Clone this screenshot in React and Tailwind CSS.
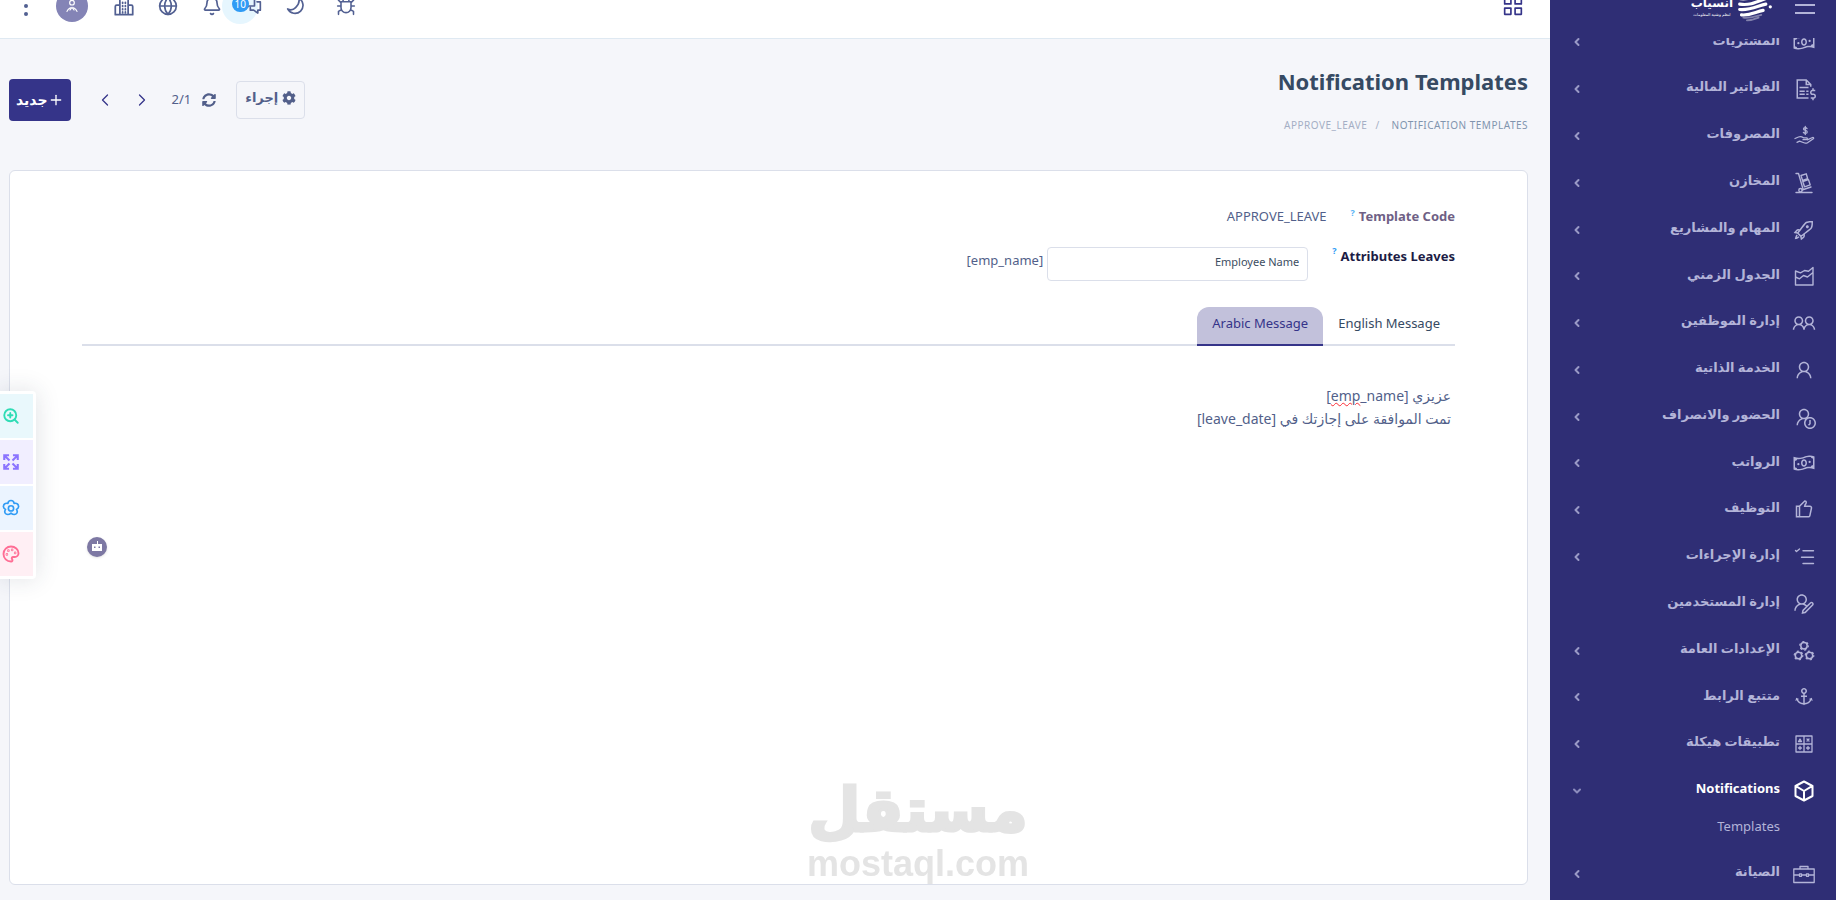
import React, { useState } from "react";
import {
  LiaAnchorSolid,
  LiaFileInvoiceDollarSolid,
  LiaMoneyBillWaveSolid,
  LiaRocketSolid,
  LiaThumbsUp,
  LiaUserClockSolid,
  LiaUserEditSolid,
  LiaUserFriendsSolid,
  LiaUserSolid,
} from "react-icons/lia";
import { FaCog, FaSyncAlt } from "react-icons/fa";
import { ChevronDown, ChevronLeft, ChevronRight, Globe, Palette, Plus, ZoomIn, Bell } from "lucide-react";

function Svg({ children, className = "size-6", width = 1.5, ...rest }) {
  return (
    <svg
      viewBox="0 0 24 24"
      className={className}
      fill="none"
      stroke="currentColor"
      strokeWidth={width}
      strokeLinecap="round"
      strokeLinejoin="round"
      aria-hidden="true"
      {...rest}
    >
      {children}
    </svg>
  );
}

const HandDollarIcon = () => (
  <Svg width={1.3}>
    <path d="M15 4.6c-.4-.7-1-1-1.7-1-1 0-1.8.6-1.8 1.4s.7 1.2 1.8 1.4 1.9.7 1.9 1.5-.8 1.5-1.9 1.5c-.8 0-1.5-.4-1.9-1M13.3 2.4v8.2" />
    <path d="M3 14.5 6.5 13c2-.8 3.5-.3 5 .8h3c1 0 1.200 1.700 0 1.900h-3.500M15.300 15.800l5.200-2.300c1-.3 1.600.7.800 1.300l-5.800 4c-1 .6-1.800.5-2.800.2L7.500 17.200 5 18.300" />
  </Svg>
);

const DollyIcon = () => (
  <Svg width={1.4}>
    <path d="M4 2.5h2.5L11 18M4 21.5h16M10 19l9-3" />
    <circle cx="8.5" cy="19.2" r="1.7" />
    <path d="m9 4.5 5.2-1.7 1.5 4.9-5.2 1.700zM10.800 10.500l5.700-1.800 1.700 5.200-5.700 1.900z" />
  </Svg>
);

const AreaIcon = () => (
  <Svg width={1.4}>
    <path d="M3.5 7v14h17.5V3.5l-4.5 3.8-4-.8-4 2.3zM3.5 13l4 1.8 4-3.3 4 1.5 5.5-4.5" />
  </Svg>
);

const TasksIcon = () => (
  <Svg width={1.4}>
    <path d="m3.5 5.500 1 1 3-2.500M11 5.800h10.500M9.500 12.200h12M11 18.500h10.500" />
  </Svg>
);

const GearsIcon = () => (
  <Svg width={1.5}>
    <circle cx="12" cy="6.8" r="3.2" />
    <circle cx="6.5" cy="16.5" r="3.2" />
    <circle cx="17.5" cy="16.5" r="3.2" />
    <g strokeWidth="1.2" strokeDasharray="1.2 3.4">
      <circle cx="12" cy="6.8" r="4.3" />
      <circle cx="6.5" cy="16.5" r="4.3" />
      <circle cx="17.5" cy="16.5" r="4.3" />
    </g>
  </Svg>
);

const AppsIcon = () => (
  <Svg width={1.3}>
    <path d="M4 4h16v16H4zM12 4v16M4 12h16M6.500 9.500 8 7l1.500 2.500zM15 7l2 2M17 7l-2 2M6.500 16h3M8 14.500v3M16 14.500v3M14.500 16h3" />
  </Svg>
);

const CubeIcon = () => (
  <Svg width={2}>
    <path d="M12 2.5 20.5 7v10L12 21.5 3.5 17V7zM4 7.2 12 12l8-4.8M12 12v9" />
  </Svg>
);

const ToolboxIcon = () => (
  <Svg width={1.3}>
    <path d="M1.800 7h20.400v13.500H1.800zM8 7V4.500h8V7M1.800 13h5.700M9.500 13h5M16.500 13h5.700M7.500 11.800h2v2.500h-2zM14.500 11.800h2v2.500h-2z" />
  </Svg>
);

const BuildingIcon = () => (
  <Svg className="size-[22px]" width={1.9}>
    <path d="M7.5 21.5V5l4.5-3 4.5 3v16.5M7.5 11H4a1.5 1.5 0 0 0-1.5 1.5v9h19v-9A1.5 1.5 0 0 0 20 11h-3.5" />
    <path strokeDasharray="1 2.5" d="M10.5 8v12M13.5 8v12" />
  </Svg>
);

const ChatsIcon = () => (
  <Svg className="size-5" width={2}>
    <path d="M2 3h13v9H8l-3 3v-3H2zM18 7h4v10h-3v3.500L14 17h-4v-3" />
  </Svg>
);

const BugIcon = () => (
  <Svg className="size-5" width={1.9}>
    <path d="M6 7h12v7a6 6 0 0 1-12 0zM8.500 7V5.500a3.500 3.500 0 0 1 7 0V7M6 12H2M22 12h-4M6 8 3 5M18 8l3-3M6.500 16.500 3 18.500V22M17.500 16.500l3.500 2V22" />
  </Svg>
);

const MoonIcon = () => (
  <Svg className="size-5" width={2}>
    <path d="M15 2.500a9.700 9.700 0 1 1-13 13c3 1.500 7 1 9.500-1.500S17 7 15 2.500z" />
  </Svg>
);

const ExpandIcon = ({ className }) => (
  <Svg className={className} width={2.8} strokeLinecap="square" strokeLinejoin="miter">
    <path d="M3 8V3h5M3.500 3.500 9 9M16 3h5v5M20.500 3.500 15 9M3 16v5h5M3.500 20.500 9 15M21 16v5h-5M20.500 20.500 15 15" />
  </Svg>
);

const FlowerIcon = ({ className }) => (
  <Svg className={className} width={2.2}>
    <circle cx="12" cy="12.5" r="3.5" />
    <path d="M12 2c2.400 0 3.900 1.700 4.100 3.900 2.500-.5 5.100.3 5.800 2.700.8 2.300-.7 4.100-2.600 5.200 1.200 2 1.300 4.700-.6 6.100-2 1.400-4.700.5-6.700-1.200-2 1.700-4.700 2.600-6.700 1.200-1.900-1.400-1.800-4.100-.6-6.100-1.900-1.100-3.400-2.900-2.600-5.200.7-2.400 3.300-3.200 5.800-2.700C8.100 3.700 9.600 2 12 2z" />
  </Svg>
);

const BotIcon = () => (
  <svg viewBox="0 0 12 12" className="size-3" aria-hidden="true">
    <path fill="currentColor" fillRule="evenodd" d="M6 0h1v3h4v7H1V3h5zM3 5.500v1.500h1.500V5.500zM7.500 5.500v1.500H9V5.500z" />
  </svg>
);

const menu = [
  { label: "المشتريات", Icon: LiaMoneyBillWaveSolid },
  { label: "الفواتير المالية", Icon: LiaFileInvoiceDollarSolid },
  { label: "المصروفات", Icon: HandDollarIcon },
  { label: "المخازن", Icon: DollyIcon },
  { label: "المهام والمشاريع", Icon: LiaRocketSolid },
  { label: "الجدول الزمني", Icon: AreaIcon },
  { label: "إدارة الموظفين", Icon: LiaUserFriendsSolid },
  { label: "الخدمة الذاتية", Icon: LiaUserSolid },
  { label: "الحضور والانصراف", Icon: LiaUserClockSolid },
  { label: "الرواتب", Icon: LiaMoneyBillWaveSolid },
  { label: "التوظيف", Icon: LiaThumbsUp },
  { label: "إدارة الإجراءات", Icon: TasksIcon },
  { label: "إدارة المستخدمين", Icon: LiaUserEditSolid, leaf: true },
  { label: "الإعدادات العامة", Icon: GearsIcon },
  { label: "متتبع الرابط", Icon: LiaAnchorSolid },
  { label: "تطبيقات هيكلة", Icon: AppsIcon },
  { label: "Notifications", Icon: CubeIcon, open: true, children: ["Templates"] },
  { label: "الصيانة", Icon: ToolboxIcon },
];

const dock = [
  { label: "Zoom", Icon: ZoomIn, tone: "bg-[#e9f8fc] text-[#2fdcb5]" },
  { label: "Fullscreen", Icon: ExpandIcon, tone: "bg-[#f1eeff] text-[#8b74ff]" },
  { label: "Settings", Icon: FlowerIcon, tone: "bg-[#ebf4ff] text-[#2f9bf5]" },
  { label: "Theme", Icon: Palette, tone: "bg-[#ffeff4] text-[#ff6d94]" },
];

function Sidebar() {
  return (
    <aside className="flex h-screen w-[286px] shrink-0 flex-col overflow-hidden bg-[#2f2e75] text-[#b3b4d8]">
      <div className="z-10 h-[38px] shrink-0 overflow-hidden bg-[#2f2e75]">
        <div className="-mt-7 flex h-[66px] items-center gap-5 pr-[21px]">
          <button aria-label="Menu" className="flex w-5 flex-col gap-[6px]">
            <span className="h-[2px] bg-current" />
            <span className="h-[2px] bg-current" />
            <span className="h-[2px] bg-current" />
          </button>
          <a href="#home" className="flex items-center gap-[2px] text-white">
            <svg viewBox="0 0 38 40" className="h-9 w-10" fill="none" stroke="currentColor" strokeLinecap="round" aria-hidden="true">
              <path strokeWidth="3.5" d="M3 13c10 1 18-3 30-8M2 19c12 2 20-3 31-7M2 25c12 1 20-4 29-6M4 31c9 1 15-3 24-5" />
              <path strokeWidth="2" opacity=".4" d="M6 34c7 1 12-1 20-3M10 37c5 0 8-1 13-3" />
              <circle cx="36" cy="22" r="1.8" fill="currentColor" stroke="none" />
            </svg>
            <span className="flex flex-col items-center pt-1">
              <span className="text-xs leading-4 font-bold">انسياب</span>
              <span className="text-[4px] leading-2">لنظم وتقنية المعلومات</span>
            </span>
          </a>
        </div>
      </div>

      <nav>
        <ul className="-mt-[19px] flex h-[878px] flex-col">
          {menu.map(({ label, Icon, leaf, open, children }) => (
            <React.Fragment key={label}>
              <li className="flex-1">
                <a
                  href="#menu"
                  className={[
                    "flex h-full items-center gap-3 pr-5 pl-[21px] text-[13px] font-bold",
                    open ? "text-white" : "",
                  ].join(" ")}
                >
                  <span className="grid size-6 place-items-center text-2xl">
                    <Icon />
                  </span>
                  <span className="flex-1 pb-1">{label}</span>
                  {open ? (
                    <ChevronDown className="size-3 text-[#8c8cbd]" strokeWidth={4} />
                  ) : leaf ? null : (
                    <ChevronLeft className="size-3 text-[#9a9ac6]" strokeWidth={4} />
                  )}
                </a>
              </li>
              {children?.map((c) => (
                <li key={c} className="h-9 pr-14 text-[13px] leading-6">
                  <a href="#templates">{c}</a>
                </li>
              ))}
            </React.Fragment>
          ))}
        </ul>
      </nav>
    </aside>
  );
}

function Topbar() {
  return (
    <header className="h-[39px] shrink-0 overflow-hidden border-b border-[#dfe9f2] bg-white text-[#526092]">
      <div className="-mt-7 flex h-[67px] items-center pr-[27px] pl-[15px]">
        <button aria-label="Apps" className="ml-auto text-[#353489]">
          <Svg className="size-5" width={2}>
            <path d="M2 2h7.500v7.500H2zM14.500 2H22v7.500h-7.500zM2 14.500h7.500V22H2zM14.500 14.500H22V22h-7.500z" />
          </Svg>
        </button>
        <div className="flex items-center">
          <button aria-label="Debug" className="ml-[30px]"><BugIcon /></button>
          <button aria-label="Dark mode" className="ml-6"><MoonIcon /></button>
          <button aria-label="Messages" className="relative ml-5">
            <span className="absolute -top-2 right-1 size-9 rounded-full bg-[#e6f6fe]" />
            <span className="relative block"><ChatsIcon /></span>
            <span className="absolute top-0 right-[13px] rounded-full bg-[#2f9bf5] px-[3px] text-[10px] leading-4 text-white">10</span>
          </button>
          <button aria-label="Notifications" className="ml-6"><Bell className="size-5" /></button>
          <button aria-label="Language" className="ml-[23px]"><Globe className="size-5" /></button>
          <button aria-label="Company" className="ml-[25px]"><BuildingIcon /></button>
          <button aria-label="Account" className="ml-[19px] grid size-8 place-items-center rounded-full bg-[#8484b6] text-white">
            <Svg className="size-4" width={1.8}>
              <circle cx="12" cy="7" r="3.5" />
              <path d="M4.500 20c1-3 3-4.500 5-5.500M19.500 20c-1-3-3-4.500-5-5.500M9 18l3-4 3 4" />
            </Svg>
          </button>
          <button aria-label="More" className="flex w-[22px] flex-col items-center gap-1">
            <span className="size-1 rounded-full bg-current" />
            <span className="size-1 rounded-full bg-current" />
            <span className="size-1 rounded-full bg-current" />
          </button>
        </div>
      </div>
    </header>
  );
}

export default function App() {
  const [tab, setTab] = useState("ar");
  const tabClass = (name) =>
    [
      "-mb-[2px] h-[39px] rounded-t-xl border-b-2 px-[15px] pb-1",
      tab === name
        ? "border-[#353489] bg-[#c2c1db] text-[#353489]"
        : "border-transparent text-[#364a63]",
    ].join(" ");

  return (
    <div
      dir="rtl"
      className="flex h-screen overflow-hidden bg-[#f5f6fa] font-['Noto_Sans','DejaVu_Sans',sans-serif] text-[13px] text-[#525f8a]"
    >
      <Sidebar />

      <div className="flex min-w-0 flex-1 flex-col">
        <Topbar />

        <main className="flex flex-1 flex-col pr-[22px] pb-[15px] pl-[9px]">
          <div className="flex items-center justify-between pt-[26px] pb-[35px]">
            <div>
              <h1 className="text-[22px] leading-8 font-bold text-[#364a63]">Notification Templates</h1>
              <nav className="mt-[18px] flex gap-2 text-[10px] leading-5 tracking-wider uppercase">
                <a href="#templates" className="ml-1 text-[#8094ae]">Notification Templates</a>
                <span className="text-[#a4aec4]">/</span>
                <span className="text-[#a4aec4]">Approve_Leave</span>
              </nav>
            </div>

            <div className="flex items-center">
              <button className="flex h-[38px] items-center gap-1 rounded border border-[#dbdfea] px-2 pb-1 font-bold">
                <FaCog className="size-[14px]" />
                إجراء
              </button>
              <button aria-label="Refresh" className="mr-5"><FaSyncAlt className="size-[14px]" /></button>
              <span className="mr-[11px]">2/1</span>
              <button aria-label="Previous" className="mr-5 text-[#353489]"><ChevronRight className="size-5" strokeWidth={1.5} /></button>
              <button aria-label="Next" className="mr-[17px] text-[#353489]"><ChevronLeft className="size-5" strokeWidth={1.5} /></button>
              <button className="mr-6 flex h-[42px] items-center rounded bg-[#353489] px-[7px] text-sm font-bold text-white">
                <Plus className="size-4" />
                جديد
              </button>
            </div>
          </div>

          <section className="flex-1 rounded-md border border-[#dbdfea] bg-white px-[72px] pt-9">
            <div className="flex h-5 items-center">
              <span className="font-bold text-[#6f5f85]">Template Code</span>
              <sup className="mr-1 text-[9px] font-bold text-[#5bb4f5]">?</sup>
              <span className="mr-6">APPROVE_LEAVE</span>
            </div>

            <div className="mt-5 flex h-[34px]">
              <label htmlFor="attr" className="font-bold text-[#1c1c45]">Attributes Leaves</label>
              <sup className="top-1 mr-1 text-[9px] font-bold text-[#2f9bf5]">?</sup>
              <input
                id="attr"
                dir="ltr"
                defaultValue="Employee Name"
                className="mr-6 w-[261px] rounded border border-[#dbdfea] bg-white px-2 pb-1 text-right text-[11px] text-[#3c4d62]"
              />
              <span className="mr-1 pt-1">[emp_name]</span>
            </div>

            <div role="tablist" className="mt-[26px] flex border-b-2 border-[#dbdfea]">
              <button role="tab" aria-selected={tab === "en"} onClick={() => setTab("en")} className={tabClass("en")}>
                English Message
              </button>
              <button role="tab" aria-selected={tab === "ar"} onClick={() => setTab("ar")} className={tabClass("ar")}>
                Arabic Message
              </button>
            </div>

            <div
              role="textbox"
              aria-multiline="true"
              aria-label="Message"
              contentEditable
              suppressContentEditableWarning
              spellCheck={false}
              className="mt-[38px] min-h-40 pr-1 text-sm leading-[23px] outline-none"
            >
              <p>
                عزيزي{" "}
                <bdi>
                  [<span className="underline decoration-red-500 decoration-wavy decoration-1">emp</span>_name]
                </bdi>
              </p>
              <p>
                تمت الموافقة على إجازتك في <bdi>[leave_date]</bdi>
              </p>
            </div>
          </section>
        </main>
      </div>

      <div className="fixed top-[391px] left-0 flex flex-col gap-[2px] rounded-r bg-white py-[3px] pr-[3px] shadow-[0_0_24px_rgba(43,55,72,0.15)]">
        {dock.map(({ label, Icon, tone }) => (
          <button key={label} aria-label={label} className={["flex h-11 w-[33px] items-center justify-end pl-[2px]", tone].join(" ")}>
            <Icon className="size-[18px] shrink-0" strokeWidth={2.5} />
          </button>
        ))}
      </div>

      <button aria-label="Assistant" className="fixed top-[537px] left-[87px] grid size-5 place-items-center rounded-full bg-[#7d78a3] text-white shadow">
        <BotIcon />
      </button>

      <div className="pointer-events-none fixed inset-x-0 bottom-[18px] flex flex-col items-center font-bold text-[#e4e4e4]">
        <span className="font-['DejaVu_Sans',sans-serif] text-[60px] leading-[72px] [-webkit-text-stroke:3px_#e4e4e4]">مستقل</span>
        <span className="font-['Liberation_Sans',sans-serif] text-4xl leading-9">mostaql.com</span>
      </div>
    </div>
  );
}
